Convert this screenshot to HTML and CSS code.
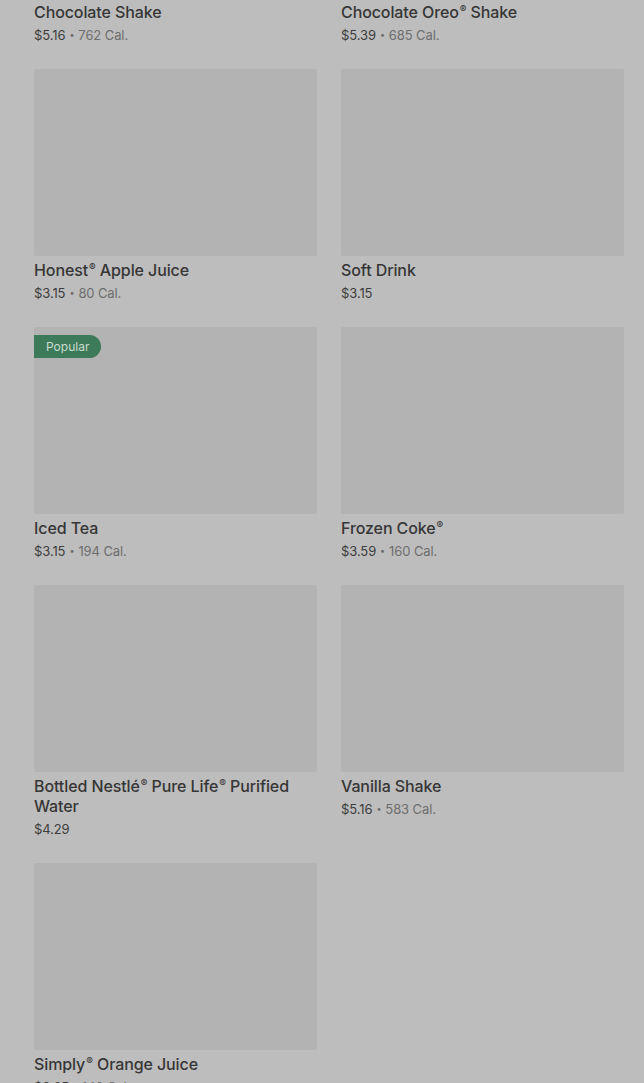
FILE: index.html
```html
<!DOCTYPE html>
<html>
<head>
<meta charset="utf-8">
<link rel="stylesheet" href="styles.css">
</head>
<body>
<div class="page">
  <div class="grid">
    <div class="card"><div class="thumb"></div><div class="name">Chocolate Shake</div><div class="meta"><span class="price">$5.16</span><span class="dot">•</span><span class="cal">762 Cal.</span></div></div>
    <div class="card"><div class="thumb"></div><div class="name">Chocolate Oreo<span class="reg">®</span> Shake</div><div class="meta"><span class="price">$5.39</span><span class="dot">•</span><span class="cal">685 Cal.</span></div></div>
    <div class="card"><div class="thumb"></div><div class="name">Honest<span class="reg">®</span> Apple Juice</div><div class="meta"><span class="price">$3.15</span><span class="dot">•</span><span class="cal">80 Cal.</span></div></div>
    <div class="card"><div class="thumb"></div><div class="name">Soft Drink</div><div class="meta"><span class="price">$3.15</span></div></div>
    <div class="card"><div class="thumb"><span class="badge">Popular</span></div><div class="name">Iced Tea</div><div class="meta"><span class="price">$3.15</span><span class="dot">•</span><span class="cal">194 Cal.</span></div></div>
    <div class="card"><div class="thumb"></div><div class="name">Frozen Coke<span class="reg">®</span></div><div class="meta"><span class="price">$3.59</span><span class="dot">•</span><span class="cal">160 Cal.</span></div></div>
    <div class="card"><div class="thumb"></div><div class="name">Bottled Nestlé<span class="reg">®</span> Pure Life<span class="reg">®</span> Purified Water</div><div class="meta"><span class="price">$4.29</span></div></div>
    <div class="card"><div class="thumb"></div><div class="name">Vanilla Shake</div><div class="meta"><span class="price">$5.16</span><span class="dot">•</span><span class="cal">583 Cal.</span></div></div>
    <div class="card"><div class="thumb"></div><div class="name">Simply<span class="reg">®</span> Orange Juice</div><div class="meta"><span class="price">$3.65</span><span class="dot">•</span><span class="cal">140 Cal.</span></div></div>
  </div>
</div>
</body>
</html>
```

FILE: styles.css
```css
html, body {
  margin: 0;
  padding: 0;
  background: #bdbdbd;
  overflow: hidden;
}
body {
  font-family: Inter, "Noto Sans", Roboto, sans-serif;
  color: #383838;
}
.page {
  padding: 0 20px 0 34px;
  height: 1083px;
  overflow: hidden;
}
.grid {
  margin-top: -189px;
  display: grid;
  grid-template-columns: 283px 283px;
  column-gap: 24px;
  row-gap: 24px;
}
.card {
  display: flex;
  flex-direction: column;
}
.thumb {
  position: relative;
  height: 187px;
  background: #b3b3b3;
  border-radius: 2px;
}
.badge {
  position: absolute;
  left: 0;
  top: 8px;
  height: 23px;
  line-height: 23px;
  padding: 0 12px 0 12px;
  background: #3d7a59;
  color: #c9dccf;
  font-size: 12px;
  border-radius: 0 12px 12px 0;
}
.name {
  margin-top: 4px;
  font-size: 16px;
  line-height: 20px;
  font-weight: 500;
  letter-spacing: -0.1px;
  color: #363636;
}
.reg {
  font-size: 10px;
  line-height: 10px;
  vertical-align: 5px;
  margin-left: 1px;
}
.meta {
  margin-top: 3px;
  font-size: 13px;
  line-height: 20px;
  display: flex;
  align-items: center;
  letter-spacing: -0.1px;
}
.price {
  color: #3d3d3d;
}
.dot {
  color: #6a6a6a;
  font-size: 9px;
  margin: 0 4px;
}
.cal {
  color: #6e6e6e;
}
```
